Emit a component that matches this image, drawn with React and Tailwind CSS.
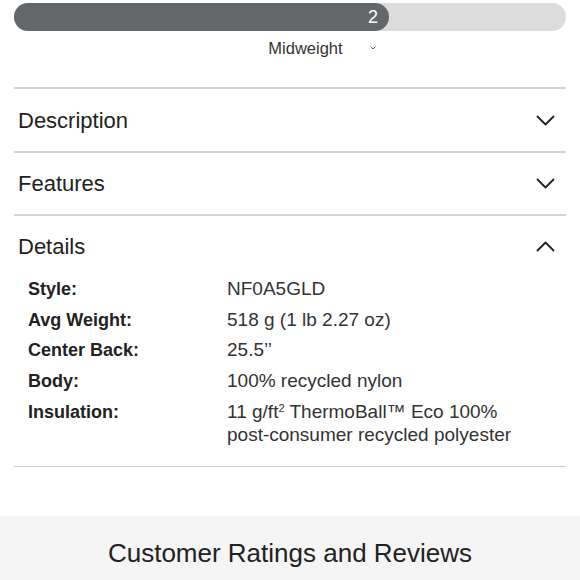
import React from "react"

const details = [
    ["Style:", "NF0A5GLD"],
    ["Avg Weight:", "518 g (1 lb 2.27 oz)"],
    ["Center Back:", "25.5’’"],
    ["Body:", "100% recycled nylon"],
    [
        "Insulation:",
        <>
            11 g/ft<sup className="text-[11px]">2</sup> ThermoBall™ Eco 100% post-consumer recycled polyester
        </>,
    ],
]

function Chevron({ up }) {
    return (
        <svg width="19" height="11" viewBox="0 0 19 11" fill="none" stroke="#222" strokeWidth="1.8" strokeLinecap="round" strokeLinejoin="round">
            {up ? <polyline points="1.5,9.5 9.5,1.5 17.5,9.5" /> : <polyline points="1.5,1.5 9.5,9.5 17.5,1.5" />}
        </svg>
    )
}

function Header({ title, up, h }) {
    return (
        <div className={`flex items-center justify-between pl-[4px] pr-[11px] ${h}`}>
            <span className="text-[22px] text-[#222]">{title}</span>
            <Chevron up={up} />
        </div>
    )
}

export default function App() {
    return (
        <div className="w-[580px] h-[580px] overflow-hidden bg-white font-['Liberation_Sans',Arial,sans-serif] text-[#222]">
            <div className="px-[14px] pt-[3px]">
                {/* weight slider */}
                <div className="h-[28px] rounded-full bg-[#dcdcdc] flex">
                    <div className="w-[375px] h-full rounded-full bg-[#64676a] flex items-center justify-end pr-[11px]">
                        <span className="text-white text-[18px] leading-none">2</span>
                    </div>
                </div>
                <div className="flex items-center justify-center gap-[27px] mt-[7px] h-[20px] pl-[64px]">
                    <span className="text-[16.5px] text-[#333]">Midweight</span>
                    <svg width="6" height="4" viewBox="0 0 6 4" fill="none" stroke="#666" strokeWidth="1">
                        <polyline points="0.5,0.5 3,3 5.5,0.5" />
                    </svg>
                </div>

                <div className="mt-[29px] border-t-2 border-[#d4d4d4]">
                    <Header title="Description" h="h-[62px]" />
                </div>
                <div className="border-t-2 border-[#d4d4d4]">
                    <Header title="Features" h="h-[61px]" />
                </div>
                <div className="border-t-2 border-[#d4d4d4] border-b border-b-[#cfcfcf]">
                    <Header title="Details" up h="h-[60px]" />
                    <div className="flex flex-col gap-[6.7px] pl-[14px] pt-[1px] pb-[20px] text-[18px] leading-[23px]">
                        {details.map(([k, v]) => (
                            <div key={k} className="flex items-baseline">
                                <span className="w-[199px] shrink-0 font-bold text-[#222]">{k}</span>
                                <span className="w-[310px] text-[19px] text-[#333]">{v}</span>
                            </div>
                        ))}
                    </div>
                </div>
            </div>

            <div className="mt-[49px] bg-[#f5f5f5] h-[80px] flex justify-center pt-[18px]">
                <h2 className="text-[26px] text-[#222]">Customer Ratings and Reviews</h2>
            </div>
        </div>
    )
}
